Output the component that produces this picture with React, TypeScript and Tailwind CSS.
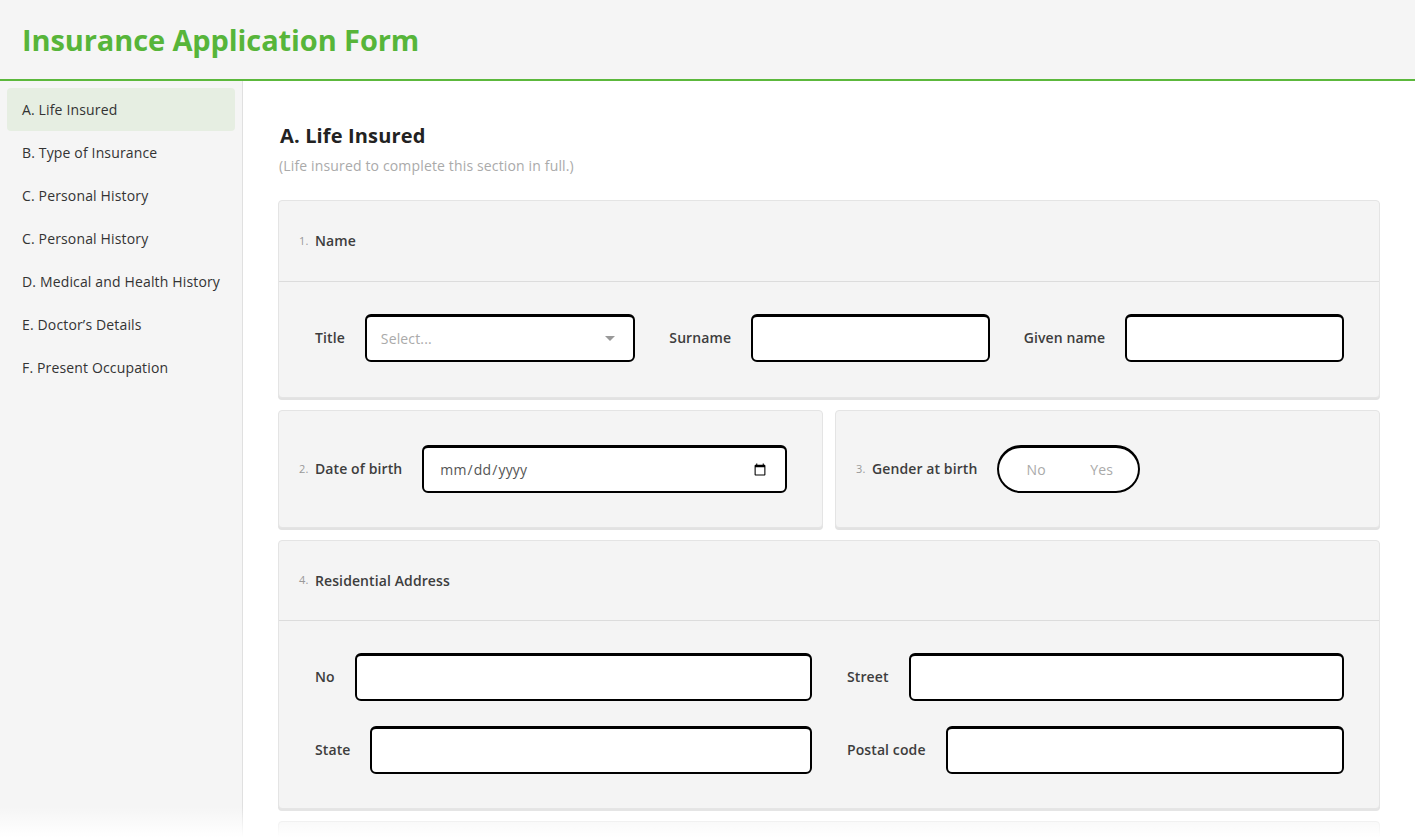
import React from "react";

const navItems = [
  "A. Life Insured",
  "B. Type of Insurance",
  "C. Personal History",
  "C. Personal History",
  "D. Medical and Health History",
  "E. Doctor’s Details",
  "F. Present Occupation",
];

const inputCls =
  "h-12 flex-1 min-w-0 bg-white border-2 border-t-[3px] border-black rounded-md outline-none px-3 text-sm";

const labelCls = "text-sm font-semibold text-[#3d3d3d] tracking-[0.1px]";

const Card = ({ className = "", children }: { className?: string; children: React.ReactNode }) => (
  <div
    className={`bg-[#f4f4f4] border border-[#e4e4e4] rounded-[4px] shadow-[0_2px_0_#e2e2e2] ${className}`}
  >
    {children}
  </div>
);

const Num = ({ n }: { n: number }) => (
  <span className="w-4 text-[11px] text-[#999] font-normal">{n}.</span>
);

const Field = ({ label, children }: { label: string; children?: React.ReactNode }) => (
  <div className="flex items-center">
    <span className={`${labelCls} mr-5 whitespace-nowrap`}>{label}</span>
    {children ?? <input className={inputCls} />}
  </div>
);

export default function App() {
  return (
    <div className="h-[837px] flex flex-col overflow-hidden relative font-['Open_Sans',sans-serif] text-[#333] tracking-[0.15px]">
      <header className="h-[81px] shrink-0 bg-[#f5f5f5] border-b-2 border-[#5cb83c] flex items-center px-[22px]">
        <h1 className="text-[29px] font-bold text-[#57b53a] tracking-[-0.1px]">
          Insurance Application Form
        </h1>
      </header>

      <div className="flex flex-1 min-h-0">
        <aside className="w-[243px] shrink-0 bg-[#f5f5f5] border-r border-[#e0e0e0] pt-[7px] px-[7px]">
          {navItems.map((item, i) => (
            <div
              key={i}
              className={`h-[43px] flex items-center px-[15px] text-sm rounded-[4px] ${
                i === 0 ? "bg-[#e6eee2]" : ""
              }`}
            >
              {item}
            </div>
          ))}
        </aside>

        <main className="flex-1 bg-white px-[35px] pt-[40px]">
          <h2 className="text-[20px] font-bold text-[#222] ml-[2px] leading-[30px]">A. Life Insured</h2>
          <p className="text-sm text-[#aaa] ml-[1px] mt-[5px] leading-5">
            (Life insured to complete this section in full.)
          </p>

          <div className="mt-[24px] flex flex-col gap-3">
            <Card>
              <div className="h-[81px] flex items-center pl-[20px] border-b border-[#dcdcdc]">
                <Num n={1} />
                <span className={labelCls}>Name</span>
              </div>
              <div className="grid grid-cols-3 gap-x-[34px] pl-[36px] pr-[35px] pt-[32px] pb-[35px]">
                <Field label="Title">
                  <div className={`${inputCls} flex items-center justify-between pl-[14px] pr-[18px]`}>
                    <span className="text-sm text-[#aaa]">Select...</span>
                    <svg width="10" height="6" viewBox="0 0 10 6">
                      <path d="M0 0h10L5 5z" fill="#999" />
                    </svg>
                  </div>
                </Field>
                <Field label="Surname" />
                <Field label="Given name" />
              </div>
            </Card>

            <div className="grid grid-cols-2 gap-3">
              <Card className="h-[118px] flex items-center pl-[20px] pr-[35px]">
                <Num n={2} />
                <span className={`${labelCls} mr-5`}>Date of birth</span>
                <input
                  type="date"
                  className={`${inputCls} pl-[15px] pr-[16px] text-[#555]`}
                />
              </Card>
              <Card className="h-[118px] flex items-center pl-[20px] pr-[35px]">
                <Num n={3} />
                <span className={`${labelCls} mr-5`}>Gender at birth</span>
                <div className="h-12 w-[143px] bg-white border-2 border-t-[3px] border-black rounded-full flex items-center text-sm text-[#aaa]">
                  <span className="w-1/2 text-center pl-[4px]">No</span>
                  <span className="w-1/2 text-center pr-[4px]">Yes</span>
                </div>
              </Card>
            </div>

            <Card>
              <div className="h-[80px] flex items-center pl-[20px] border-b border-[#dcdcdc]">
                <Num n={4} />
                <span className={labelCls}>Residential Address</span>
              </div>
              <div className="grid grid-cols-2 gap-x-[35px] gap-y-[25px] pl-[36px] pr-[35px] pt-[32px] pb-[34px]">
                <Field label="No" />
                <Field label="Street" />
                <Field label="State" />
                <Field label="Postal code" />
              </div>
            </Card>

            <Card className="h-[120px]">
              <div />
            </Card>
          </div>
        </main>
      </div>

      <div className="absolute left-0 right-0 bottom-0 h-[30px] bg-gradient-to-b from-white/0 to-white pointer-events-none" />
    </div>
  );
}
